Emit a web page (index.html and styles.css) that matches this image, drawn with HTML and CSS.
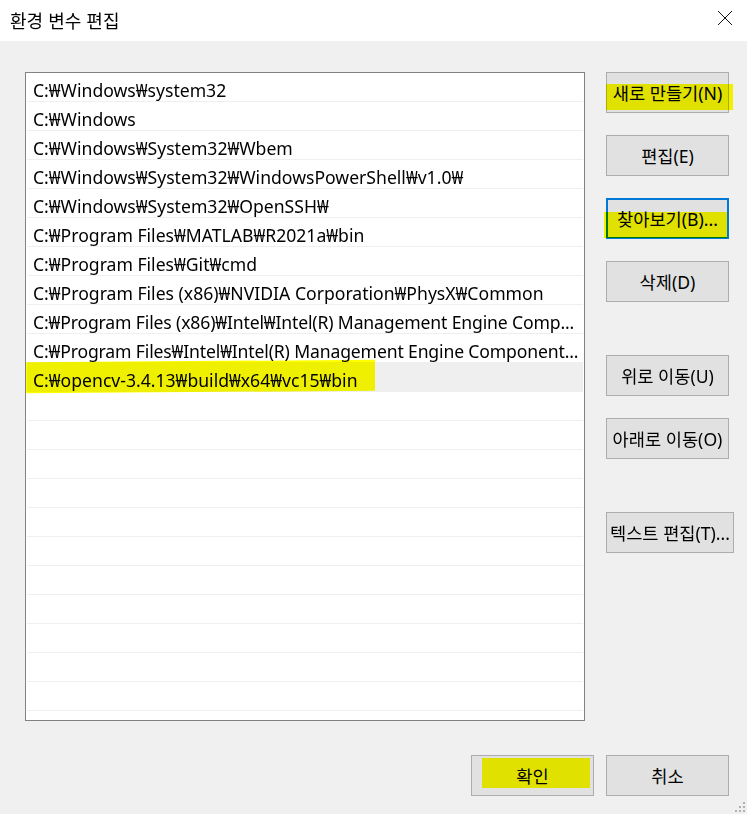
FILE: index.html
```html
<!DOCTYPE html>
<html lang="ko">
<head>
  <meta charset="UTF-8" />
  <meta name="viewport" content="width=device-width, initial-scale=1.0" />
  <title>환경 변수 편집</title>
  <link rel="stylesheet" href="styles.css">
</head>
<body>
  <div class="dialog">
    <div class="titlebar">
      <span class="title">환경 변수 편집</span>
      <svg class="close" width="16" height="16" viewBox="0 0 16 16">
        <path d="M1 1 L15 15 M15 1 L1 15" stroke="#111" stroke-width="1" fill="none" />
      </svg>
    </div>
    <div class="content">
      <div class="main">
        <div class="list">
          <div class="row">C:₩Windows₩system32</div>
          <div class="row">C:₩Windows</div>
          <div class="row">C:₩Windows₩System32₩Wbem</div>
          <div class="row">C:₩Windows₩System32₩WindowsPowerShell₩v1.0₩</div>
          <div class="row">C:₩Windows₩System32₩OpenSSH₩</div>
          <div class="row">C:₩Program Files₩MATLAB₩R2021a₩bin</div>
          <div class="row">C:₩Program Files₩Git₩cmd</div>
          <div class="row">C:₩Program Files (x86)₩NVIDIA Corporation₩PhysX₩Common</div>
          <div class="row tight">C:₩Program Files (x86)₩Intel₩Intel(R) Management Engine Comp...</div>
          <div class="row tight">C:₩Program Files₩Intel₩Intel(R) Management Engine Component...</div>
          <div class="row selected">C:₩opencv-3.4.13₩build₩x64₩vc15₩bin<span class="mark mark-row"></span></div>
          <div class="row"></div>
          <div class="row"></div>
          <div class="row"></div>
          <div class="row"></div>
          <div class="row"></div>
          <div class="row"></div>
          <div class="row"></div>
          <div class="row"></div>
          <div class="row"></div>
          <div class="row"></div>
          <div class="row"></div>
          <div class="row"></div>
        </div>
        <div class="side">
          <button class="btn">새로 만들기(N)<span class="mark mark-new"></span></button>
          <button class="btn gap-s">편집(E)</button>
          <button class="btn focused gap-s">찾아보기(B)...<span class="mark mark-browse"></span></button>
          <button class="btn gap-s">삭제(D)</button>
          <button class="btn gap-l">위로 이동(U)</button>
          <button class="btn gap-s">아래로 이동(O)</button>
          <button class="btn wide gap-l">텍스트 편집(T)...</button>
        </div>
      </div>
      <div class="footer">
        <button class="btn">확인<span class="mark mark-ok"></span></button>
        <button class="btn">취소</button>
      </div>
    </div>
    <svg class="grip" width="10" height="10" viewBox="0 0 10 10">
      <rect x="8" y="0" width="2" height="2" fill="#b0b0b0" />
      <rect x="4" y="4" width="2" height="2" fill="#b0b0b0" />
      <rect x="8" y="4" width="2" height="2" fill="#b0b0b0" />
      <rect x="0" y="8" width="2" height="2" fill="#b0b0b0" />
      <rect x="4" y="8" width="2" height="2" fill="#b0b0b0" />
      <rect x="8" y="8" width="2" height="2" fill="#b0b0b0" />
    </svg>
  </div>
</body>
</html>
```

FILE: styles.css
```css
body {
  margin: 0;
  padding: 0;
  font-family: "Noto Sans", "Noto Sans CJK KR", sans-serif;
  color: #000;
  background: #f0f0f0;
}
.dialog {
  position: relative;
  width: 747px;
  height: 814px;
  background: #f0f0f0;
  overflow: hidden;
}
.titlebar {
  height: 41px;
  background: #fff;
  display: flex;
  align-items: center;
  justify-content: space-between;
  padding: 0 14px 0 10px;
}
.title {
  font-family: "Noto Sans CJK KR", sans-serif;
  font-size: 18px;
  margin-top: -2px;
}
.close {
  display: block;
  margin-top: -6px;
}
.content {
  padding: 31px 18px 0 25px;
}
.main {
  display: flex;
  align-items: flex-start;
}
.list {
  flex: none;
  width: 558px;
  height: 647px;
  border: 1px solid #828282;
  background: #fff;
  overflow: hidden;
}
.row {
  position: relative;
  height: 28px;
  line-height: 34px;
  margin: 0 1px;
  padding-left: 6px;
  border-bottom: 1px solid #efefef;
  font-size: 17.6px;
  white-space: nowrap;
  overflow: hidden;
}
.row.tight {
  letter-spacing: -0.15px;
}
.row.selected {
  background: #efefef;
  overflow: visible;
}
.side {
  flex: none;
  width: 123px;
  display: flex;
  flex-direction: column;
  margin-left: 21px;
}
.btn {
  position: relative;
  flex: none;
  width: 123px;
  height: 41px;
  padding: 0;
  border: 1px solid #adadad;
  background: #e1e1e1;
  font-family: "Noto Sans", "Noto Sans CJK KR", sans-serif;
  font-size: 17.6px;
  color: #000;
  white-space: nowrap;
  text-align: center;
  overflow: visible;
}
.btn.focused {
  border: 2px solid #0078d7;
}
.btn.wide {
  width: 128px;
}
.gap-s {
  margin-top: 22px;
}
.gap-l {
  margin-top: 53px;
}
.footer {
  display: flex;
  justify-content: flex-end;
  gap: 12px;
  margin-top: 34px;
}
.mark {
  position: absolute;
  background: #ffff00;
  mix-blend-mode: multiply;
  pointer-events: none;
}
.mark-row {
  left: -1px;
  top: -2px;
  width: 349px;
  height: 31px;
  transform: skewY(-0.4deg);
}
.mark-new {
  left: -1px;
  top: 11px;
  width: 127px;
  height: 26px;
}
.mark-browse {
  left: -4px;
  top: 12px;
  width: 123px;
  height: 26px;
}
.mark-ok {
  left: 10px;
  top: 2px;
  width: 108px;
  height: 30px;
}
.grip {
  position: absolute;
  right: 2px;
  bottom: 2px;
}
```
